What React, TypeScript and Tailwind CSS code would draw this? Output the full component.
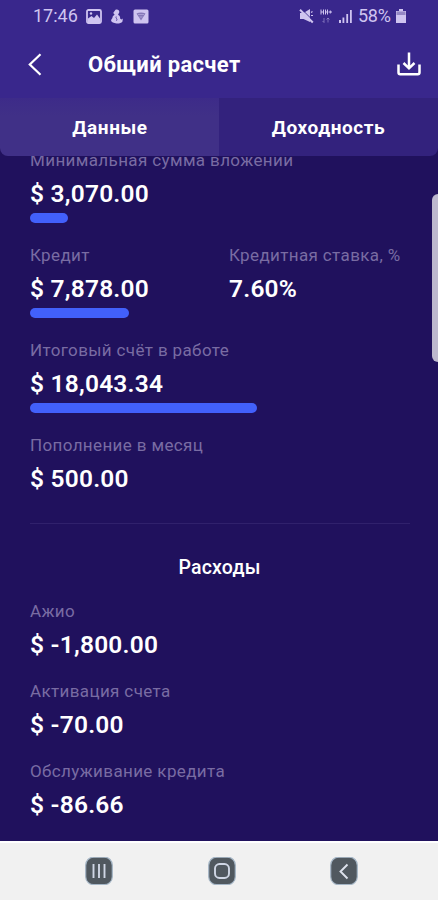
import React from 'react';

interface MetricProps {
    label: string;
    value: string;
    bar?: number;
    className?: string;
}

const EXPENSES: MetricProps[] = [
    { label: 'Ажио', value: '$ -1,800.00' },
    { label: 'Активация счета', value: '$ -70.00' },
    { label: 'Обслуживание кредита', value: '$ -86.66' },
];

const Metric: React.FC<MetricProps> = ({ label, value, bar, className }) => (
    <div className={className}>
        <div className="h-5 whitespace-nowrap text-[17px] leading-5 tracking-[0.37px] text-[#796ca3]">{label}</div>
        <div className="mt-2 h-8 whitespace-nowrap text-[24.5px] font-semibold leading-8 tracking-[0.22px] text-white">{value}</div>
        {bar !== undefined && (
            <div className="mt-[3px] h-2.5 rounded-full bg-[#4260fb]" style={{ width: bar }} />
        )}
    </div>
);

const StatusBar = () => (
    <div className="flex h-8 items-center justify-between pl-[33px] pr-[31px] text-[#cfc4f0]">
        <div className="flex items-center">
            <span className="w-[53px] text-lg leading-8">17:46</span>
            <svg className="h-[15px] w-4" viewBox="0 0 16 15" fill="none">
                <rect x="1" y="1" width="14" height="13" rx="1.5" stroke="currentColor" strokeWidth="1.8" />
                <path d="M2 12V9.500L5.500 7l2.500 2L11 5.500l3 4V13H2z" fill="currentColor" />
                <circle cx="5" cy="4.5" r="1.2" fill="currentColor" />
            </svg>
            <svg className="ml-2 h-[15px] w-[15px]" viewBox="0 0 15 15" fill="currentColor">
                <path d="M5.500.8C7.500 0 9.500 1 9.300 3 9.200 4.500 8 4.800 8.200 6c1.600.6 2.200 2 1.900 3.600l1.300 1 1.400-1.200-.3 3c-1.200 1.800-3.800 2.200-6 2-2.800-.2-5-.9-5.400-2.600C.9 10 2.500 9.700 2.500 8.400 2.500 7 4 6.700 4.600 5.500L3.200 4z" />
                <path d="M6.200 7.500c-1 1.500 1.800 2.500.3 4.200" stroke="#39278c" strokeWidth=".8" fill="none" />
            </svg>
            <svg className="ml-2 h-[15px] w-4" viewBox="0 0 16 15">
                <rect x=".5" y=".5" width="15" height="14" rx="1.5" fill="currentColor" />
                <path d="M3.500 4.500c2.500-1.500 6.500-1.500 9 0L8 11.500z" fill="#8577b8" />
                <path d="M5 5.500h6M6.500 8h3" stroke="#cfc4f0" strokeWidth=".5" />
            </svg>
        </div>
        <div className="flex items-center">
            <svg className="h-4 w-[15px]" viewBox="0 0 15 16">
                <path d="M1 5h3.500L11 1v13L4.500 11H1z" fill="currentColor" />
                <path d="m12 4.500 1.500-1M12 7.500h2" stroke="currentColor" strokeWidth="1.200" />
                <path d="m2.500 1 12 12" stroke="#39278c" strokeWidth="1" />
                <path d="m1 1.800 12.800 12.700" stroke="currentColor" strokeWidth="2" />
            </svg>
            <svg className="ml-[6px] h-4 w-3" viewBox="0 0 12 16" fill="none" stroke="currentColor">
                <path d="M1 1.500v5M3.500 1.500v5M1 4h2.500M5.500 1.500v5M7.500 1.500v5M5.500 4h2M8.500 4H12M10.300 2.500v3" strokeWidth="1" />
                <path d="M4 10v4.500M2.500 13 4 14.500M8 14.500V10M6.500 11.500 8 10l1.500 1.500" strokeWidth="1" opacity=".45" />
            </svg>
            <svg className="ml-[6px] h-4 w-[15px]" viewBox="0 0 15 16" fill="currentColor">
                <path d="M1 12h2v3H1zM4.500 9.500h1.800V15H4.500zM8.300 6h1.800v9H8.300zM12 2h1.800v13H12z" />
            </svg>
            <span className="ml-[5px] w-[37px] text-lg leading-8 tracking-[-0.3px]">58%</span>
            <svg className="h-4 w-3" viewBox="0 0 12 16">
                <path d="M4 1h4v2h3v12H1V3h3z" fill="currentColor" />
                <path d="M1.500 3.500h9V7h-9z" fill="#9487c4" />
            </svg>
        </div>
    </div>
);

const AppHeader = () => (
    <header className="flex h-[66px] items-center pl-7 pr-[17px] text-white">
        <svg className="h-6 w-4" viewBox="0 0 16 24" fill="none" stroke="currentColor" strokeWidth="2.200">
            <path d="M12.500 1.300 1.800 11.500l10.700 10.200" />
        </svg>
        <h1 className="ml-11 flex-1 text-[22px] font-bold leading-8 tracking-[0.33px]">Общий расчет</h1>
        <svg className="mb-[3px] h-6 w-6" viewBox="0 0 24 24" fill="none" stroke="currentColor" strokeWidth="2.500">
            <path d="M1.500 12.500v8c0 1.200.5 1.700 1.700 1.700h17.600c1.200 0 1.700-.5 1.700-1.700v-8" />
            <path d="M12 .5v15.500M6.500 11l5.500 5.300 5.500-5.300" />
        </svg>
    </header>
);

const NavButton = ({ children }: { children: React.ReactNode }) => (
    <svg className="h-7 w-7" viewBox="0 0 28 28" fill="none">
        <rect x=".7" y=".2" width="26.600" height="27.500" rx="8" fill="#50585f" stroke="#a5b6c6" strokeWidth="1.200" />
        {children}
    </svg>
);

export default function App() {
    return (
        <div className="flex h-[900px] w-[438px] flex-col overflow-hidden bg-[#20115d] font-['Roboto',sans-serif]">
            <div className="bg-[#39278c]">
                <StatusBar />
                <AppHeader />
            </div>
            <div className="grid h-[58px] shrink-0 grid-cols-2 overflow-hidden rounded-b-lg text-center text-[19px] font-bold leading-[60px] tracking-[0.58px] text-white">
                <div className="bg-gradient-to-b from-[#3d2b89] to-[#403087] to-30% pl-px">Данные</div>
                <div className="bg-[#33227d]">Доходность</div>
            </div>

            <main className="relative min-h-0 flex-1 overflow-hidden pl-[30px] pr-7">
                <div className="-mt-1.5 flex flex-col gap-[22px]">
                    <Metric label="Минимальная сумма вложении" value="$ 3,070.00" bar={38} />
                    <div className="flex">
                        <Metric label="Кредит" value="$ 7,878.00" bar={99} className="w-[199px]" />
                        <Metric label="Кредитная ставка, %" value="7.60%" />
                    </div>
                    <Metric label="Итоговый счёт в работе" value="$ 18,043.34" bar={227} />
                    <Metric label="Пополнение в месяц" value="$ 500.00" />
                </div>

                <section className="mt-7 border-t border-[#30216c]">
                    <h2 className="mt-7 pr-px text-center text-[19.5px] font-medium leading-8 tracking-[0.2px] text-white">Расходы</h2>
                    <div className="mt-[17px] flex flex-col gap-5">
                        {EXPENSES.map(item => (
                            <Metric key={item.label} {...item} />
                        ))}
                    </div>
                </section>

                {/* scroll indicator */}
                <div className="absolute right-0 top-[38px] h-[168px] w-1.5 rounded-l-md bg-[#bdb8ce]" />
            </main>

            <nav className="flex h-[59px] shrink-0 items-center justify-between border-t-2 border-white bg-[#f1f1f1] pb-0.5 pl-[85px] pr-20">
                <NavButton>
                    <path d="M8.500 7v14M14 7v14M19.500 7v14" stroke="#cfd6e4" strokeWidth="1.900" />
                </NavButton>
                <NavButton>
                    <rect x="7" y="7" width="14" height="14" rx="4.500" stroke="#cfd6e4" strokeWidth="1.900" />
                </NavButton>
                <NavButton>
                    <path d="m17.500 7.500-7 7 7 7" stroke="#dde2ec" strokeWidth="1.900" />
                </NavButton>
            </nav>
        </div>
    );
}
